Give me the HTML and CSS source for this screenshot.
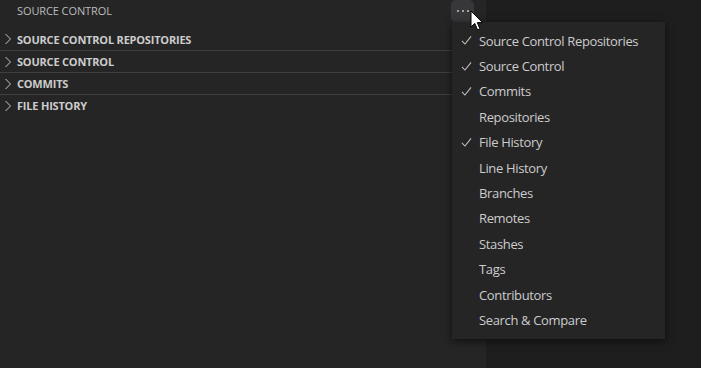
FILE: index.html
```html
<!DOCTYPE html>
<html>
<head>
<meta charset="utf-8">
<link rel="stylesheet" href="styles.css">
</head>
<body>
<div class="workbench">
  <aside class="sidebar">
    <div class="title">
      <span class="title-text">SOURCE CONTROL</span>
      <div class="actions">
        <div class="more"><span></span><span></span><span></span></div>
      </div>
    </div>
    <div class="section first"><svg class="chev" viewBox="0 0 16 16"><path d="M5.5 3 L10.5 8 L5.5 13" fill="none" stroke="#c5c5c5" stroke-width="1"/></svg><span>SOURCE CONTROL REPOSITORIES</span></div>
    <div class="section"><svg class="chev" viewBox="0 0 16 16"><path d="M5.5 3 L10.5 8 L5.5 13" fill="none" stroke="#c5c5c5" stroke-width="1"/></svg><span>SOURCE CONTROL</span></div>
    <div class="section"><svg class="chev" viewBox="0 0 16 16"><path d="M5.5 3 L10.5 8 L5.5 13" fill="none" stroke="#c5c5c5" stroke-width="1"/></svg><span>COMMITS</span></div>
    <div class="section"><svg class="chev" viewBox="0 0 16 16"><path d="M5.5 3 L10.5 8 L5.5 13" fill="none" stroke="#c5c5c5" stroke-width="1"/></svg><span>FILE HISTORY</span></div>
  </aside>
  <main class="editor"></main>
</div>

<div class="menu">
  <div class="item"><span class="check"><svg viewBox="0 0 12 12"><path d="M1 6.5 L4.3 9.8 L11 1.5" fill="none" stroke="#c5c5c5" stroke-width="1.1"/></svg></span>Source Control Repositories</div>
  <div class="item"><span class="check"><svg viewBox="0 0 12 12"><path d="M1 6.5 L4.3 9.8 L11 1.5" fill="none" stroke="#c5c5c5" stroke-width="1.1"/></svg></span>Source Control</div>
  <div class="item"><span class="check"><svg viewBox="0 0 12 12"><path d="M1 6.5 L4.3 9.8 L11 1.5" fill="none" stroke="#c5c5c5" stroke-width="1.1"/></svg></span>Commits</div>
  <div class="item"><span class="check"></span>Repositories</div>
  <div class="item"><span class="check"><svg viewBox="0 0 12 12"><path d="M1 6.5 L4.3 9.8 L11 1.5" fill="none" stroke="#c5c5c5" stroke-width="1.1"/></svg></span>File History</div>
  <div class="item"><span class="check"></span>Line History</div>
  <div class="item"><span class="check"></span>Branches</div>
  <div class="item"><span class="check"></span>Remotes</div>
  <div class="item"><span class="check"></span>Stashes</div>
  <div class="item"><span class="check"></span>Tags</div>
  <div class="item"><span class="check"></span>Contributors</div>
  <div class="item"><span class="check"></span>Search &amp; Compare</div>
</div>

<svg class="cursor" width="14" height="22" viewBox="0 0 14 22">
  <path d="M1 1 L1 17 L4.8 13.4 L7.6 20 L10 19 L7.3 12.6 L12.5 12.6 Z" fill="#fff" stroke="#000" stroke-width="1" stroke-linejoin="round"/>
</svg>
</body>
</html>
```

FILE: styles.css
```css
html, body {
  margin: 0;
  padding: 0;
  width: 701px;
  height: 368px;
  overflow: hidden;
  background: #1e1e1e;
  font-family: "Open Sans", "Noto Sans", sans-serif;
}

.workbench {
  display: flex;
  height: 368px;
}

.sidebar {
  width: 486px;
  background: #252526;
  display: flex;
  flex-direction: column;
}

.editor {
  flex: 1;
  background: #1e1e1e;
}

.title {
  height: 28px;
  display: flex;
  align-items: flex-start;
  justify-content: space-between;
}

.title-text {
  padding-left: 17px;
  font-size: 11px;
  line-height: 22px;
  color: #bbbbbb;
  letter-spacing: -0.1px;
}

.actions {
  padding-right: 12px;
}

.more {
  width: 23px;
  height: 22px;
  border-radius: 5px;
  background: #37373a;
  display: flex;
  align-items: center;
  justify-content: center;
  gap: 3px;
}

.more span {
  width: 2px;
  height: 2px;
  background: #c5c5c5;
  border-radius: 1px;
}

.section {
  height: 22px;
  display: flex;
  align-items: center;
  border-top: 1px solid #3f3f40;
  box-sizing: border-box;
  color: #cccccc;
  font-size: 11px;
  font-weight: 700;
  letter-spacing: -0.2px;
}

.section.first {
  border-top: none;
}

.chev {
  width: 16px;
  height: 16px;
  margin-right: 1px;
}

.menu {
  position: absolute;
  left: 452px;
  top: 22px;
  width: 213px;
  padding: 6px 0;
  background: #252526;
  box-shadow: 0 2px 8px rgba(0, 0, 0, 0.6);
  color: #cccccc;
  font-size: 13px;
  letter-spacing: -0.35px;
}

.item {
  height: 25.4px;
  display: flex;
  align-items: center;
}

.check {
  width: 27px;
  height: 12px;
  padding-left: 9px;
  box-sizing: border-box;
  display: flex;
  align-items: center;
}

.check svg {
  width: 11px;
  height: 11px;
}

.cursor {
  position: absolute;
  left: 470px;
  top: 10px;
}
```
